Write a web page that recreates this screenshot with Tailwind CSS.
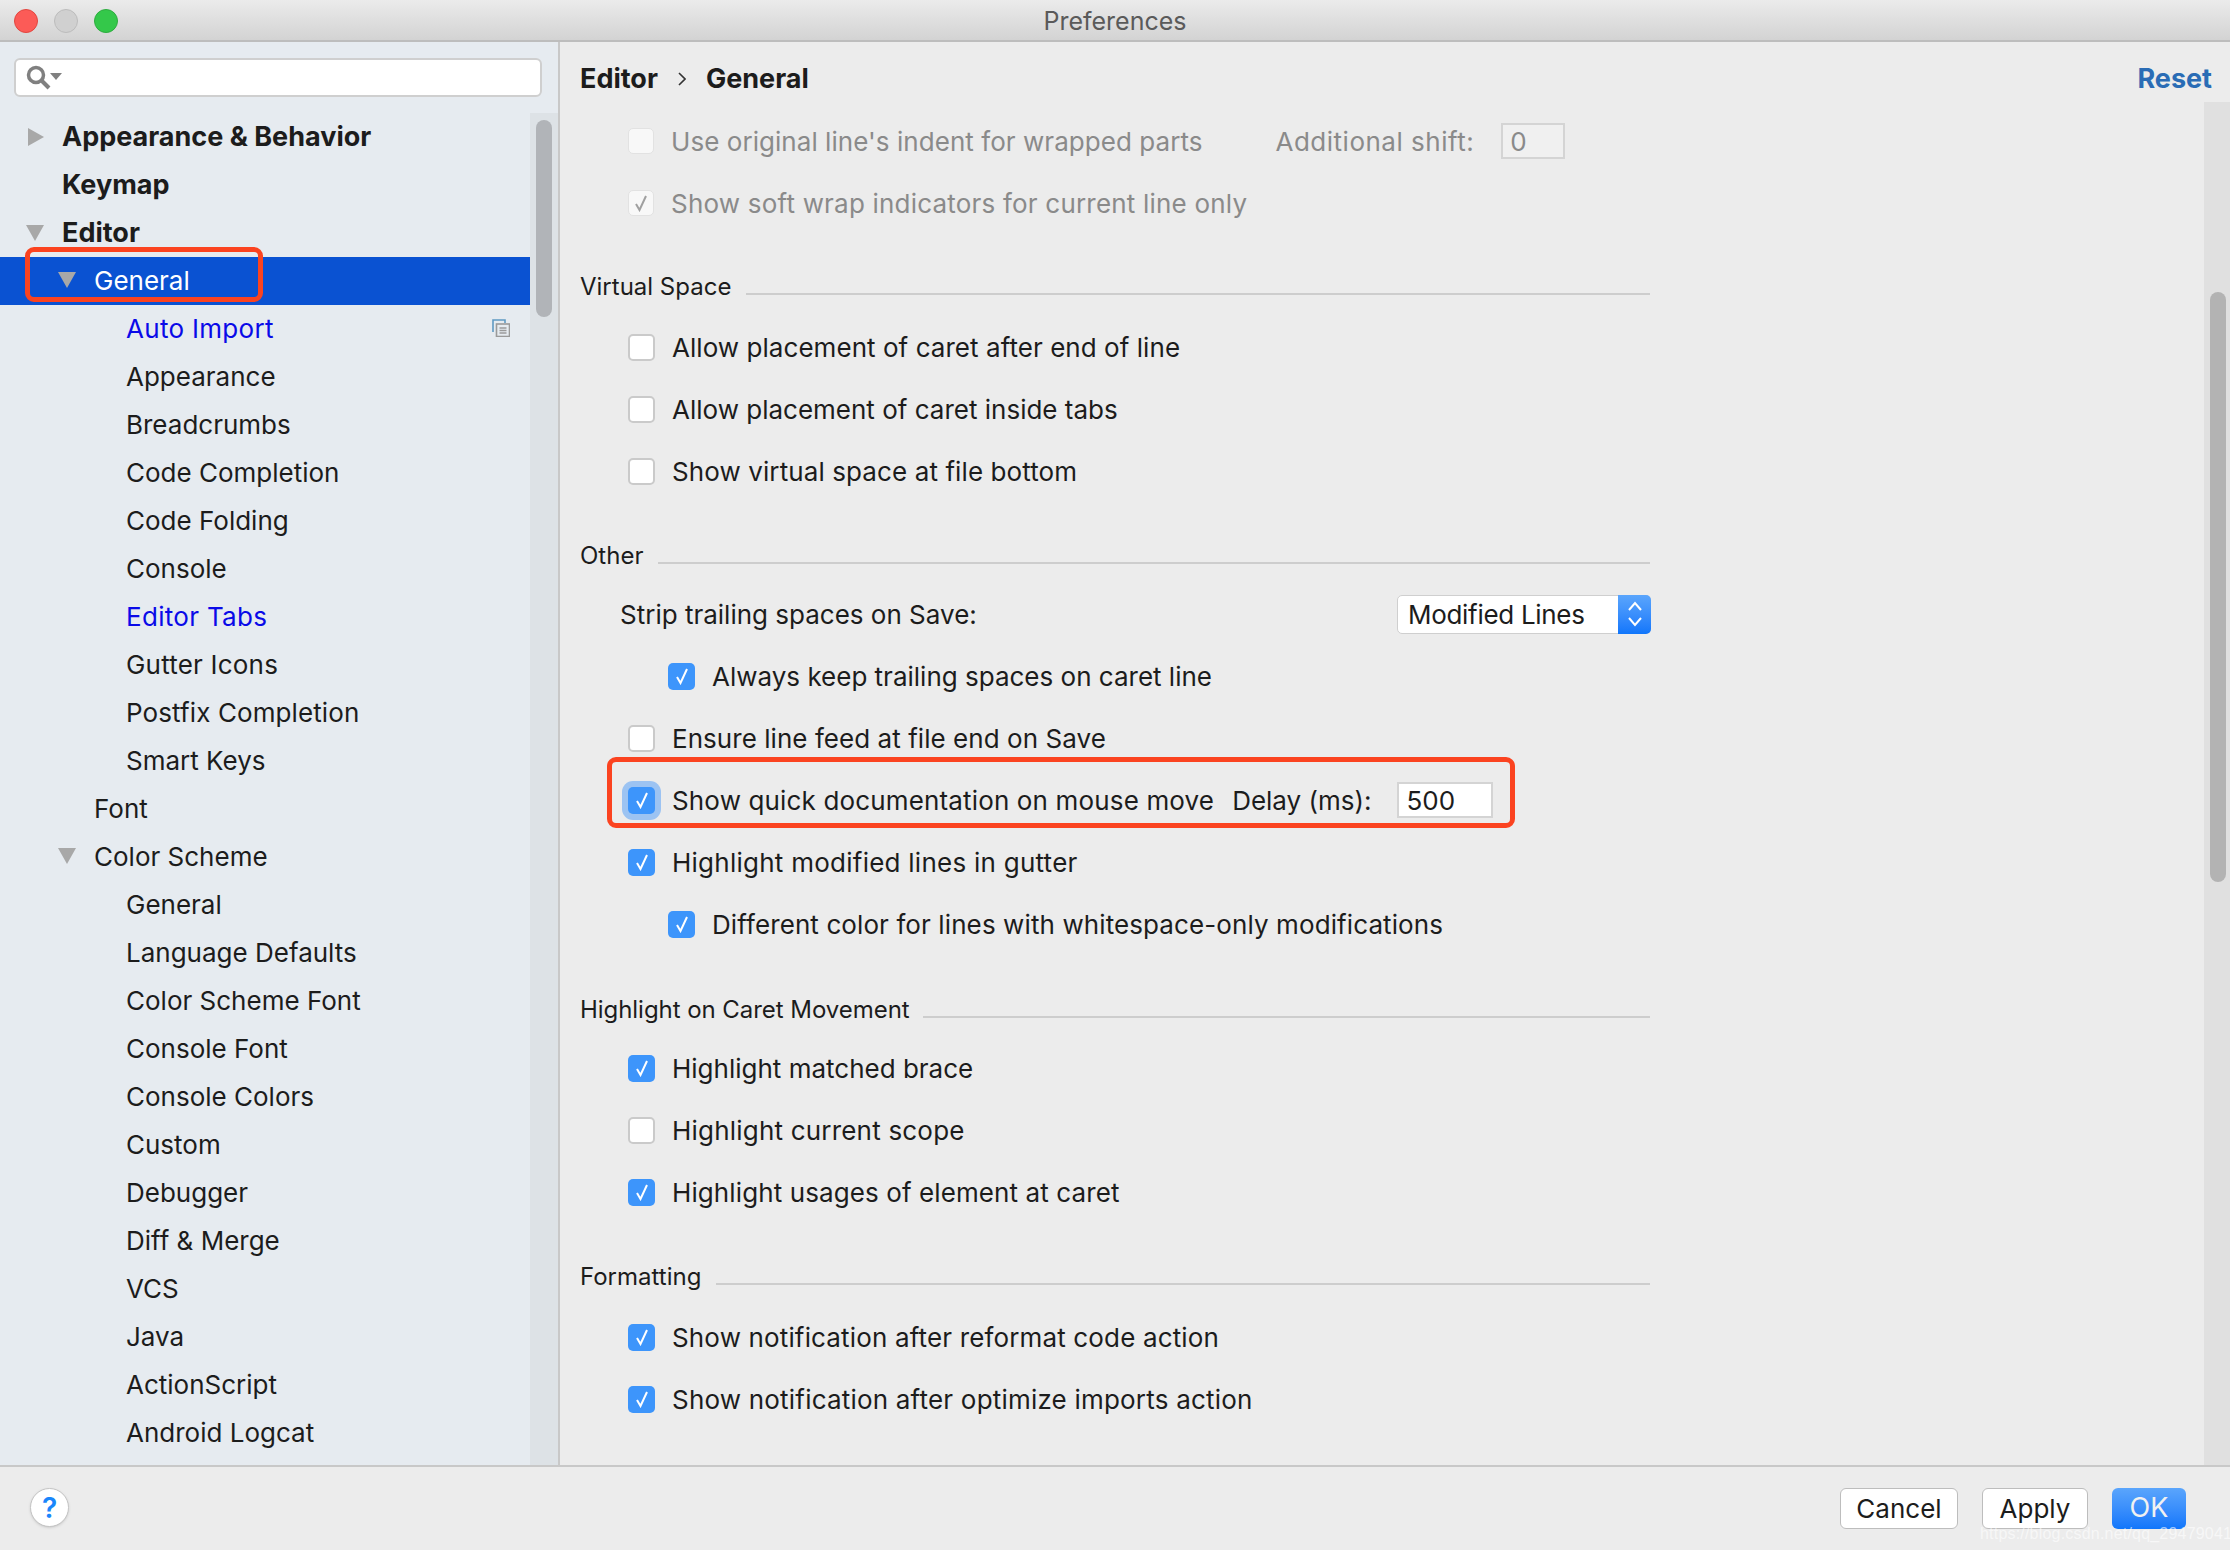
<!DOCTYPE html>
<html lang="en">
<head>
  <meta charset="UTF-8">
  <title>Preferences</title>
  <script src="https://cdn.jsdelivr.net/npm/@tailwindcss/browser@4"></script>
</head>
<body class="relative w-[2230px] h-[1550px] overflow-hidden bg-[#ececec] text-[#1c1c1c] text-[26px] font-['Inter',sans-serif]">

  <!-- title bar -->
  <div class="relative h-[42px] pt-[3px] flex items-center justify-center border-b-2 border-[#bdbdbd] bg-gradient-to-b from-[#ebebeb] to-[#d3d3d3]">
    <div class="absolute left-[14px] top-[9px] flex gap-[16px]">
      <div class="w-[24px] h-[24px] rounded-full bg-[#fc5b57] border border-[#e2463f]"></div>
      <div class="w-[24px] h-[24px] rounded-full bg-[#d0d0d0] border border-[#bcbcbc]"></div>
      <div class="w-[24px] h-[24px] rounded-full bg-[#34c84a] border border-[#2dac3f]"></div>
    </div>
    <span class="text-[25px] text-[#5a5a5a]">Preferences</span>
  </div>

  <div class="flex h-[1423px]">
    <!-- sidebar -->
    <div class="w-[560px] shrink-0 flex flex-col bg-[#e6ebf0] border-r-2 border-[#c8c8c8]">
      <div class="h-[71px] shrink-0 pt-[16px] pl-[14px]">
        <div class="w-[528px] h-[39px] flex items-center pl-[10px] bg-white border-2 border-[#cfcfcf] rounded-[6px]">
          <svg width="38" height="26" viewBox="0 0 38 26" fill="none"><circle cx="10" cy="10" r="7.5" stroke="#808080" stroke-width="3.5"/><path d="M15 15l8 8" stroke="#808080" stroke-width="4"/><path d="M24 8h12l-6 7z" fill="#808080"/></svg>
        </div>
      </div>
      <div class="flex flex-1 min-h-0">
        <div class="flex-1 min-w-0 overflow-hidden [&>div]:pb-[2px]">
          <div class="h-[48px] flex items-center font-bold text-[27px] !pb-0">
            <div class="w-[62px] pl-[28px]"><svg class="block" width="16" height="18" viewBox="0 0 16 18"><path d="M0 0l16 9-16 9z" fill="#a8a8a8"/></svg></div>Appearance &amp; Behavior
          </div>
          <div class="h-[48px] flex items-center pl-[62px] font-bold text-[27px] !pb-0">Keymap</div>
          <div class="h-[48px] flex items-center font-bold text-[27px] !pb-0">
            <div class="w-[62px] pl-[26px]"><svg class="block" width="18" height="16" viewBox="0 0 18 16"><path d="M0 0h18l-9 16z" fill="#a8a8a8"/></svg></div>Editor
          </div>
          <div class="h-[48px] flex items-center bg-[#0a52d2] text-white">
            <div class="w-[94px] pl-[58px]"><svg class="block" width="18" height="16" viewBox="0 0 18 16"><path d="M0 0h18l-9 16z" fill="#a8a8a8"/></svg></div>General
          </div>
          <div class="h-[48px] flex items-center justify-between pl-[126px] pr-[20px] text-[#0a0ae8]">
            <span class="tracking-[0.3px]">Auto Import</span>
            <svg width="18" height="18" viewBox="0 0 18 18" fill="none"><path d="M1 13V1h12v3" stroke="#5f9ac2" stroke-width="1.6"/><rect x="4.5" y="5" width="13" height="12.5" stroke="#9a9a9a" stroke-width="1.6"/><path d="M7.500 9h7M7.500 11.500h7M7.500 14h7" stroke="#9a9a9a" stroke-width="1.400"/></svg>
          </div>
          <div class="h-[48px] flex items-center pl-[126px]">Appearance</div>
          <div class="h-[48px] flex items-center pl-[126px]">Breadcrumbs</div>
          <div class="h-[48px] flex items-center pl-[126px]">Code Completion</div>
          <div class="h-[48px] flex items-center pl-[126px]">Code Folding</div>
          <div class="h-[48px] flex items-center pl-[126px]">Console</div>
          <div class="h-[48px] flex items-center pl-[126px] text-[#0a0ae8] tracking-[0.3px]">Editor Tabs</div>
          <div class="h-[48px] flex items-center pl-[126px] tracking-[0.2px]">Gutter Icons</div>
          <div class="h-[48px] flex items-center pl-[126px] tracking-[0.1px]">Postfix Completion</div>
          <div class="h-[48px] flex items-center pl-[126px]">Smart Keys</div>
          <div class="h-[48px] flex items-center pl-[94px]">Font</div>
          <div class="h-[48px] flex items-center">
            <div class="w-[94px] pl-[58px]"><svg class="block" width="18" height="16" viewBox="0 0 18 16"><path d="M0 0h18l-9 16z" fill="#a8a8a8"/></svg></div>Color Scheme
          </div>
          <div class="h-[48px] flex items-center pl-[126px]">General</div>
          <div class="h-[48px] flex items-center pl-[126px]">Language Defaults</div>
          <div class="h-[48px] flex items-center pl-[126px]">Color Scheme Font</div>
          <div class="h-[48px] flex items-center pl-[126px]">Console Font</div>
          <div class="h-[48px] flex items-center pl-[126px]">Console Colors</div>
          <div class="h-[48px] flex items-center pl-[126px]">Custom</div>
          <div class="h-[48px] flex items-center pl-[126px]">Debugger</div>
          <div class="h-[48px] flex items-center pl-[126px]">Diff &amp; Merge</div>
          <div class="h-[48px] flex items-center pl-[126px]">VCS</div>
          <div class="h-[48px] flex items-center pl-[126px]">Java</div>
          <div class="h-[48px] flex items-center pl-[126px]">ActionScript</div>
          <div class="h-[48px] flex items-center pl-[126px]">Android Logcat</div>
        </div>
        <!-- sidebar scrollbar -->
        <div class="w-[28px] shrink-0 pt-[7px] pl-[6px] bg-[#dde2e6]">
          <div class="w-[16px] h-[197px] rounded-full bg-[#b1b4b8]"></div>
        </div>
      </div>
    </div>

    <!-- main pane -->
    <div class="flex-1 min-w-0 flex flex-col">
      <div class="h-[60px] shrink-0 pt-[14px] flex items-center justify-between pl-[20px] pr-[18px] font-bold text-[27px]">
        <div class="flex items-center">
          <span>Editor</span>
          <svg class="mx-[20px]" width="8" height="14" viewBox="0 0 8 14" fill="none"><path d="M1 1l6 6-6 6" stroke="#333" stroke-width="1.600"/></svg>
          <span>General</span>
        </div>
        <span class="text-[#2a6cb5]">Reset</span>
      </div>
      <div class="flex flex-1 min-h-0">
        <div class="flex-1 min-w-0 pl-[20px] pt-[8px]">

          <div class="h-[62px] flex items-center pl-[48px] text-[#8a8a8a]">
            <div class="w-[26px] h-[26px] mr-[17px] rounded-[5px] bg-[#f8f8f8] border border-[#e2e2e2]"></div>
            <span class="tracking-[0.05px]">Use original line's indent for wrapped parts</span>
            <span class="ml-[73px] tracking-[0.5px]">Additional shift:</span>
            <div class="ml-[27px] w-[64px] h-[36px] pl-[7px] flex items-center bg-[#f0f0f0] border-2 border-[#d4d4d4]">0</div>
          </div>
          <div class="h-[62px] flex items-center pl-[48px] text-[#8a8a8a]">
            <div class="w-[26px] h-[26px] mr-[17px] rounded-[5px] flex items-center justify-center bg-[#f8f8f8] border border-[#e2e2e2]">
              <svg width="16" height="18" viewBox="0 0 16 18" fill="none"><path d="M3 10l3.500 6L13 2" stroke="#a0a0a0" stroke-width="2"/></svg>
            </div>
            <span class="tracking-[0.2px]">Show soft wrap indicators for current line only</span>
          </div>

          <div class="mt-[33px] h-[40px] w-[1070px] flex items-center text-[24px]">
            <span>Virtual Space</span>
            <div class="flex-1 h-[2px] ml-[15px] mt-[14px] bg-[#cdcdcd]"></div>
          </div>
          <div class="mt-[9px] h-[62px] flex items-center pl-[48px]">
            <div class="w-[27px] h-[27px] mr-[17px] rounded-[5px] bg-white border-2 border-[#cacaca]"></div>
            <span class="tracking-[0.05px]">Allow placement of caret after end of line</span>
          </div>
          <div class="h-[62px] flex items-center pl-[48px]">
            <div class="w-[27px] h-[27px] mr-[17px] rounded-[5px] bg-white border-2 border-[#cacaca]"></div>
            <span>Allow placement of caret inside tabs</span>
          </div>
          <div class="h-[62px] flex items-center pl-[48px]">
            <div class="w-[27px] h-[27px] mr-[17px] rounded-[5px] bg-white border-2 border-[#cacaca]"></div>
            <span class="tracking-[0.1px]">Show virtual space at file bottom</span>
          </div>

          <div class="mt-[34px] h-[40px] w-[1070px] flex items-center text-[24px]">
            <span>Other</span>
            <div class="flex-1 h-[2px] ml-[15px] mt-[14px] bg-[#cdcdcd]"></div>
          </div>
          <div class="mt-[7px] h-[62px] w-[1071px] flex items-center justify-between pl-[40px]">
            <span>Strip trailing spaces on Save:</span>
            <div class="w-[254px] h-[39px] flex items-center justify-between pl-[10px] bg-white border border-[#cfcfcf] rounded-[5px]">
              <span class="-tracking-[0.3px]">Modified Lines</span>
              <div class="w-[33px] h-[39px] -mr-px flex items-center justify-center rounded-r-[5px] bg-gradient-to-b from-[#5aa5fc] to-[#0f76fb]">
                <svg width="16" height="28" viewBox="0 0 16 28" fill="none"><path d="M2 10l6-7 6 7M2 18l6 7 6-7" stroke="#fff" stroke-width="2"/></svg>
              </div>
            </div>
          </div>
          <div class="h-[62px] flex items-center pl-[88px]">
            <div class="w-[27px] h-[27px] mr-[17px] rounded-[5px] flex items-center justify-center bg-[#3d95fb]">
              <svg width="16" height="18" viewBox="0 0 16 18" fill="none"><path d="M3 10l3.500 6L13 2" stroke="#fff" stroke-width="2"/></svg>
            </div>
            <span>Always keep trailing spaces on caret line</span>
          </div>
          <div class="h-[62px] flex items-center pl-[48px]">
            <div class="w-[27px] h-[27px] mr-[17px] rounded-[5px] bg-white border-2 border-[#cacaca]"></div>
            <span class="tracking-[0.05px]">Ensure line feed at file end on Save</span>
          </div>
          <div class="h-[62px] flex items-center pl-[48px]">
            <div class="w-[27px] h-[27px] mr-[17px] rounded-[5px] flex items-center justify-center bg-[#3d95fb] ring-[6px] ring-[#9cc3f2]">
              <svg width="16" height="18" viewBox="0 0 16 18" fill="none"><path d="M3 10l3.500 6L13 2" stroke="#fff" stroke-width="2"/></svg>
            </div>
            <span class="tracking-[0.15px]">Show quick documentation on mouse move</span>
            <span class="ml-[18px]">Delay (ms):</span>
            <div class="ml-[26px] w-[96px] h-[36px] pl-[7px] flex items-center bg-white border-2 border-[#d4d4d4]">500</div>
          </div>
          <div class="h-[62px] flex items-center pl-[48px]">
            <div class="w-[27px] h-[27px] mr-[17px] rounded-[5px] flex items-center justify-center bg-[#3d95fb]">
              <svg width="16" height="18" viewBox="0 0 16 18" fill="none"><path d="M3 10l3.500 6L13 2" stroke="#fff" stroke-width="2"/></svg>
            </div>
            <span class="tracking-[0.25px]">Highlight modified lines in gutter</span>
          </div>
          <div class="h-[62px] flex items-center pl-[88px]">
            <div class="w-[27px] h-[27px] mr-[17px] rounded-[5px] flex items-center justify-center bg-[#3d95fb]">
              <svg width="16" height="18" viewBox="0 0 16 18" fill="none"><path d="M3 10l3.500 6L13 2" stroke="#fff" stroke-width="2"/></svg>
            </div>
            <span class="tracking-[0.1px]">Different color for lines with whitespace-only modifications</span>
          </div>

          <div class="mt-[35px] h-[40px] w-[1070px] flex items-center text-[24px]">
            <span class="-tracking-[0.05px]">Highlight on Caret Movement</span>
            <div class="flex-1 h-[2px] ml-[13px] mt-[14px] bg-[#cdcdcd]"></div>
          </div>
          <div class="mt-[7px] h-[62px] flex items-center pl-[48px]">
            <div class="w-[27px] h-[27px] mr-[17px] rounded-[5px] flex items-center justify-center bg-[#3d95fb]">
              <svg width="16" height="18" viewBox="0 0 16 18" fill="none"><path d="M3 10l3.500 6L13 2" stroke="#fff" stroke-width="2"/></svg>
            </div>
            <span>Highlight matched brace</span>
          </div>
          <div class="h-[62px] flex items-center pl-[48px]">
            <div class="w-[27px] h-[27px] mr-[17px] rounded-[5px] bg-white border-2 border-[#cacaca]"></div>
            <span class="tracking-[0.2px]">Highlight current scope</span>
          </div>
          <div class="h-[62px] flex items-center pl-[48px]">
            <div class="w-[27px] h-[27px] mr-[17px] rounded-[5px] flex items-center justify-center bg-[#3d95fb]">
              <svg width="16" height="18" viewBox="0 0 16 18" fill="none"><path d="M3 10l3.500 6L13 2" stroke="#fff" stroke-width="2"/></svg>
            </div>
            <span class="tracking-[0.1px]">Highlight usages of element at caret</span>
          </div>

          <div class="mt-[34px] h-[40px] w-[1070px] flex items-center text-[24px]">
            <span>Formatting</span>
            <div class="flex-1 h-[2px] ml-[15px] mt-[14px] bg-[#cdcdcd]"></div>
          </div>
          <div class="mt-[9px] h-[62px] flex items-center pl-[48px]">
            <div class="w-[27px] h-[27px] mr-[17px] rounded-[5px] flex items-center justify-center bg-[#3d95fb]">
              <svg width="16" height="18" viewBox="0 0 16 18" fill="none"><path d="M3 10l3.500 6L13 2" stroke="#fff" stroke-width="2"/></svg>
            </div>
            <span class="tracking-[0.15px]">Show notification after reformat code action</span>
          </div>
          <div class="h-[62px] flex items-center pl-[48px]">
            <div class="w-[27px] h-[27px] mr-[17px] rounded-[5px] flex items-center justify-center bg-[#3d95fb]">
              <svg width="16" height="18" viewBox="0 0 16 18" fill="none"><path d="M3 10l3.500 6L13 2" stroke="#fff" stroke-width="2"/></svg>
            </div>
            <span class="tracking-[0.2px]">Show notification after optimize imports action</span>
          </div>
        </div>
        <!-- main scrollbar -->
        <div class="w-[26px] shrink-0 pt-[190px] pl-[6px] bg-[#e0e0e0]">
          <div class="w-[16px] h-[590px] rounded-full bg-[#b3b3b3]"></div>
        </div>
      </div>
    </div>
  </div>

  <!-- bottom bar -->
  <div class="h-[85px] flex items-start justify-between pt-[21px] pl-[30px] pr-[44px] border-t-2 border-[#c8c8c8]">
    <div class="w-[39px] h-[39px] flex items-center justify-center rounded-full bg-white border border-[#c4c4c4] shadow-sm text-[#1a86fb] text-[28px] font-semibold">?</div>
    <div class="flex">
      <div class="w-[118px] h-[41px] flex items-center justify-center rounded-[6px] bg-white border border-[#bdbdbd]">Cancel</div>
      <div class="w-[106px] h-[41px] ml-[24px] flex items-center justify-center rounded-[6px] bg-white border border-[#bdbdbd]">Apply</div>
      <div class="w-[74px] h-[41px] ml-[24px] flex items-center justify-center rounded-[6px] bg-gradient-to-b from-[#5aa5fc] to-[#0f76fb] text-[#f1f1f1] text-[27px]">OK</div>
    </div>
  </div>

  <!-- annotations -->
  <div class="absolute left-[25px] top-[247px] w-[238px] h-[55px] rounded-[9px] border-[5px] border-[#fb4320]"></div>
  <div class="absolute left-[607px] top-[757px] w-[908px] h-[71px] rounded-[9px] border-[5px] border-[#fb4320]"></div>
  <div class="absolute left-[1980px] top-[1522px] text-[16px] tracking-[0.2px] text-white/60 font-['Liberation_Sans',sans-serif]">https://blog.csdn.net/qq_29479041</div>
</body>
</html>
